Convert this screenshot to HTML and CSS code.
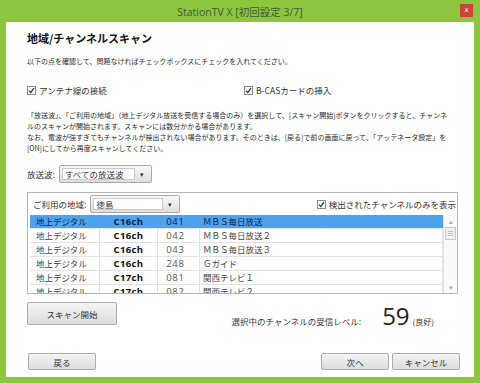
FILE: index.html
```html
<!DOCTYPE html>
<html lang="ja">
<head>
    <meta charset="UTF-8">
    <meta name="viewport" content="width=device-width, initial-scale=1.0">
    <title>StationTV X [初回設定 3/7]</title>
    <link rel="stylesheet" href="styles.css">
</head>
<body>
    <div id="window">
        <div id="titleBar">
            <div class="title">StationTV X [初回設定 3/7]</div>
            <div class="close-btn">x</div>
        </div>

        <div id="content">
            <h1 class="page-title">地域/チャンネルスキャン</h1>
            <p class="lead">以下の点を確認して、問題なければチェックボックスにチェックを入れてください。</p>

            <div class="check-row">
                <label class="check">
                    <span class="check-box"><svg width="7" height="7" viewBox="0 0 7 7"><path d="M1 3.6 L2.8 5.4 L6 1.2" fill="none" stroke="#2a3a6a" stroke-width="1.3"/></svg></span>
                    アンテナ線の接続
                </label>
                <label class="check">
                    <span class="check-box"><svg width="7" height="7" viewBox="0 0 7 7"><path d="M1 3.6 L2.8 5.4 L6 1.2" fill="none" stroke="#2a3a6a" stroke-width="1.3"/></svg></span>
                    B-CASカードの挿入
                </label>
            </div>

            <p class="note">
                「放送波」、「ご利用の地域」（地上デジタル放送を受信する場合のみ）を選択して、[スキャン開始]ボタンをクリックすると、チャンネ<br>
                ルのスキャンが開始されます。スキャンには数分かかる場合があります。<br>
                なお、電波が強すぎてもチャンネルが検出されない場合があります。そのときは、[戻る]で前の画面に戻って、「アッテネータ設定」を<br>
                [ON]にしてから再度スキャンしてください。
            </p>

            <div class="wave-row">
                <span class="field-label">放送波:</span>
                <div class="combo combo-wave">
                    <span class="combo-text">すべての放送波</span>
                    <span class="combo-arrow">▾</span>
                </div>
            </div>

            <div class="channel-box">
                <div class="area-row">
                    <span class="field-label">ご利用の地域:</span>
                    <div class="combo combo-area">
                        <span class="combo-text">徳島</span>
                        <span class="combo-arrow">▾</span>
                    </div>
                    <label class="check check-found">
                        <span class="check-box"><svg width="7" height="7" viewBox="0 0 7 7"><path d="M1 3.6 L2.8 5.4 L6 1.2" fill="none" stroke="#2a3a6a" stroke-width="1.3"/></svg></span>
                        検出されたチャンネルのみを表示
                    </label>
                </div>

                <div class="channel-list">
                    <table class="channel-table">
                        <tr class="selected">
                            <td class="col-type">地上デジタル</td>
                            <td class="col-ch">C16ch</td>
                            <td class="col-num">041</td>
                            <td class="col-name">ＭＢＳ毎日放送</td>
                        </tr>
                        <tr>
                            <td class="col-type">地上デジタル</td>
                            <td class="col-ch">C16ch</td>
                            <td class="col-num">042</td>
                            <td class="col-name">ＭＢＳ毎日放送２</td>
                        </tr>
                        <tr>
                            <td class="col-type">地上デジタル</td>
                            <td class="col-ch">C16ch</td>
                            <td class="col-num">043</td>
                            <td class="col-name">ＭＢＳ毎日放送３</td>
                        </tr>
                        <tr>
                            <td class="col-type">地上デジタル</td>
                            <td class="col-ch">C16ch</td>
                            <td class="col-num">248</td>
                            <td class="col-name">Ｇガイド</td>
                        </tr>
                        <tr>
                            <td class="col-type">地上デジタル</td>
                            <td class="col-ch">C17ch</td>
                            <td class="col-num">081</td>
                            <td class="col-name">関西テレビ１</td>
                        </tr>
                        <tr>
                            <td class="col-type">地上デジタル</td>
                            <td class="col-ch">C17ch</td>
                            <td class="col-num">082</td>
                            <td class="col-name">関西テレビ２</td>
                        </tr>
                    </table>
                    <div class="scrollbar">
                        <span class="scroll-arrow">▴</span>
                        <span class="scroll-thumb">≡</span>
                        <span class="scroll-space"></span>
                        <span class="scroll-arrow">▾</span>
                    </div>
                </div>
            </div>

            <div class="scan-row">
                <button class="btn btn-scan">スキャン開始</button>
                <div class="level">
                    <span class="level-label">選択中のチャンネルの受信レベル:</span>
                    <span class="level-value">59</span>
                    <span class="level-state">(良好)</span>
                </div>
            </div>

            <div class="nav-row">
                <button class="btn btn-nav">戻る</button>
                <span class="nav-space"></span>
                <button class="btn btn-nav">次へ</button>
                <button class="btn btn-nav">キャンセル</button>
            </div>
        </div>
    </div>
</body>
</html>
```

FILE: styles.css
```css
body {
    margin: 0;
    background: #8cc63f;
    font-family: "Noto Sans CJK JP", sans-serif;
    color: #333;
}

#window {
    height: 383px;
    display: flex;
    flex-direction: column;
}

#titleBar {
    height: 22px;
    display: grid;
    grid-template-columns: 1fr auto 1fr;
    align-items: center;
}

.title {
    grid-column: 2;
    font-family: "Open Sans", "Noto Sans CJK JP", sans-serif;
    font-size: 10.5px;
    color: #46583a;
}

.close-btn {
    grid-column: 3;
    justify-self: end;
    align-self: start;
    margin: 4px 7px 0 0;
    width: 13px;
    height: 13px;
    background: #c8443c;
    color: #fff;
    font-family: "DejaVu Sans", sans-serif;
    font-size: 7px;
    line-height: 12px;
    text-align: center;
}

#content {
    flex: 1;
    background: #fff;
    margin: 0 6px 6px;
    padding: 0 14px 7px 21px;
    display: flex;
    flex-direction: column;
}

.page-title {
    margin: 9px 0 0;
    font-size: 11px;
    line-height: 14px;
    color: #111;
}

.lead {
    margin: 11px 0 0;
    font-size: 7px;
    line-height: 10px;
    color: #2a2a2a;
}

.check-row {
    margin-top: 18px;
    display: grid;
    grid-template-columns: 217px auto;
}

.check {
    display: flex;
    align-items: center;
    font-size: 8.5px;
    line-height: 12px;
}

.check-box {
    width: 7px;
    height: 7px;
    border: 1px solid #8a8a8a;
    background: #f4f4f4;
    margin-right: 3px;
    display: flex;
}

.note {
    margin: 14px 0 0;
    font-size: 7px;
    line-height: 11px;
    white-space: nowrap;
    color: #2a2a2a;
}

.wave-row {
    margin-top: 11px;
    display: flex;
    align-items: center;
    height: 18px;
}

.field-label {
    font-size: 8.5px;
    margin-right: 4px;
}

.combo {
    display: flex;
    height: 18px;
    box-sizing: border-box;
    border: 1px solid #a9a9a9;
    border-radius: 2px;
    background: linear-gradient(#f8f8f8, #dedede);
    padding: 2px;
}

.combo-text {
    flex: 1;
    background: #fff;
    border: 1px solid #c9c9c9;
    font-size: 8.5px;
    line-height: 11px;
    padding-left: 2px;
}

.combo-arrow {
    width: 14px;
    text-align: center;
    font-size: 7px;
    line-height: 12px;
    color: #333;
}

.combo-wave {
    width: 93px;
}

.combo-area {
    width: 90px;
}

.channel-box {
    margin: 9px 2px 0 0;
    border: 1px solid #b5b5b5;
}

.area-row {
    height: 22px;
    display: flex;
    align-items: center;
    padding: 0 1px 0 5px;
}

.check-found {
    margin-left: auto;
}

.channel-list {
    margin-left: 2px;
    height: 78px;
    overflow: hidden;
    display: flex;
}

.channel-table {
    flex: 1;
    border-collapse: collapse;
    table-layout: fixed;
    align-self: flex-start;
}

.channel-table td {
    height: 13px;
    padding: 0;
    border-bottom: 1px solid #e2e2e2;
    border-right: 1px solid #e2e2e2;
    font-size: 8.5px;
    line-height: 13px;
    white-space: nowrap;
}

.channel-table tr.selected td {
    background: #4ea3ef;
    color: #10224a;
    border-right-color: #4ea3ef;
}

.col-type {
    width: 63px;
    padding-left: 6px !important;
    color: #444;
}

.channel-table .col-ch {
    width: 57px;
    text-align: center;
    font-weight: bold;
    color: #111;
    font-family: "Open Sans", sans-serif;
    font-size: 9.5px;
    letter-spacing: 0.4px;
}

.channel-table .col-num {
    width: 42px;
    text-align: center;
    color: #555;
    font-family: "Open Sans", sans-serif;
    font-size: 9.5px;
    letter-spacing: 0.8px;
    padding-right: 6px;
    box-sizing: border-box;
}

.col-name {
    padding-left: 3px !important;
    color: #444;
}

.scrollbar {
    width: 13px;
    border-left: 1px solid #e2e2e2;
    background: #fafafa;
    display: flex;
    flex-direction: column;
    align-items: center;
    color: #aaa;
    font-size: 7px;
}

.scroll-arrow {
    height: 12px;
    line-height: 12px;
}

.scroll-thumb {
    width: 9px;
    height: 11px;
    border: 1px solid #c8c8c8;
    background: #f0f0f0;
    line-height: 11px;
    text-align: center;
    color: #999;
}

.scroll-space {
    flex: 1;
}

.btn {
    font-family: "Noto Sans CJK JP", sans-serif;
    font-size: 8.5px;
    color: #333;
    border: 1px solid #acacac;
    border-radius: 2px;
    background: linear-gradient(#f4f4f4, #dcdcdc);
    padding: 0;
}

.scan-row {
    margin-top: 8px;
    display: flex;
    align-items: flex-start;
}

.btn-scan {
    width: 90px;
    height: 23px;
}

.level {
    margin-left: auto;
    margin-right: 26px;
    display: flex;
    align-items: baseline;
    margin-top: 1px;
}

.level-label {
    font-size: 8.5px;
}

.level-value {
    font-family: "Open Sans", sans-serif;
    font-size: 24px;
    line-height: 26px;
    color: #222;
    margin: 0 3px 0 21px;
}

.level-state {
    font-size: 8px;
}

.nav-row {
    margin-top: auto;
    display: flex;
    gap: 3px;
    padding-left: 1px;
}

.nav-space {
    flex: 1;
}

.btn-nav {
    width: 68px;
    height: 17px;
}
```
